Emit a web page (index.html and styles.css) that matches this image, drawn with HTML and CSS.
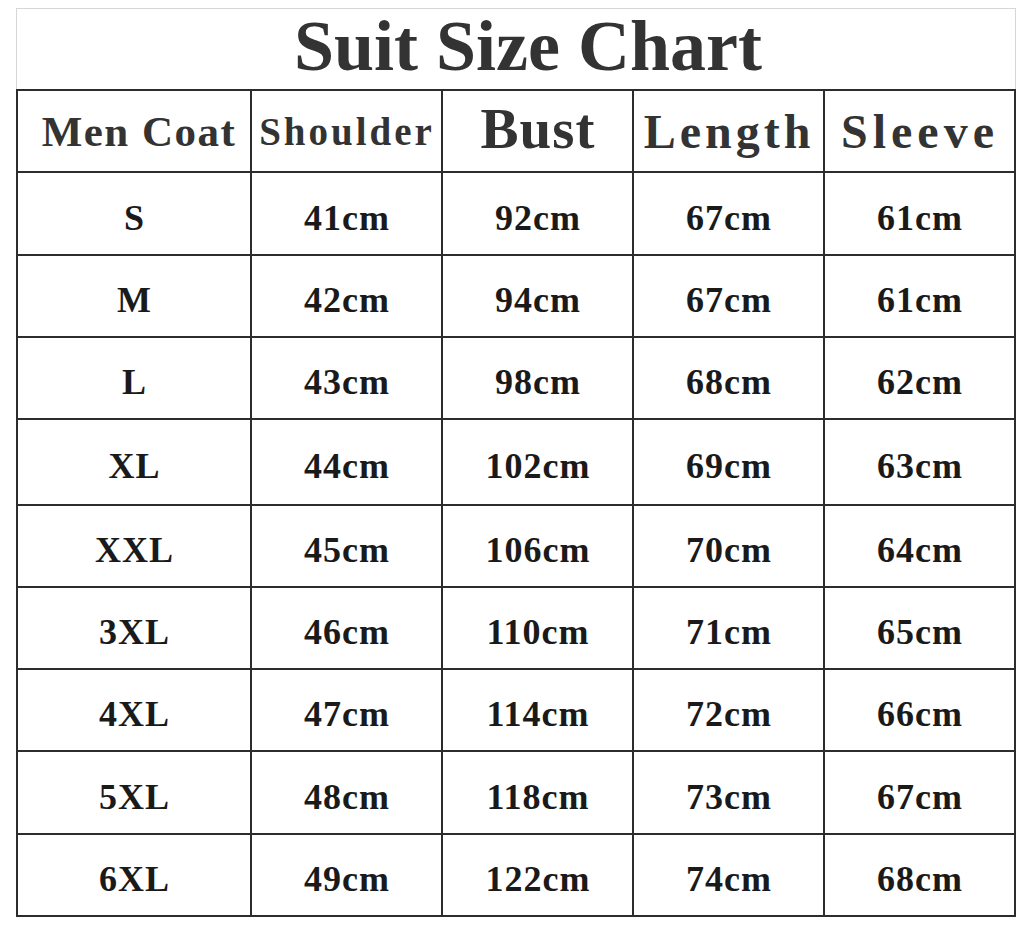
FILE: index.html
```html
<!DOCTYPE html>
<html lang="en">
<head>
<meta charset="utf-8">
<title>Suit Size Chart</title>
<link rel="stylesheet" href="styles.css">
</head>
<body>
<div class="page">
  <div class="title-box"><h1 class="title">Suit Size Chart</h1></div>
  <div class="chart">
    <div class="cell head h-men">Men Coat</div>
    <div class="cell head h-shoulder">Shoulder</div>
    <div class="cell head h-bust">Bust</div>
    <div class="cell head h-length">Length</div>
    <div class="cell head h-sleeve">Sleeve</div>

    <div class="cell">S</div><div class="cell">41cm</div><div class="cell">92cm</div><div class="cell">67cm</div><div class="cell">61cm</div>
    <div class="cell">M</div><div class="cell">42cm</div><div class="cell">94cm</div><div class="cell">67cm</div><div class="cell">61cm</div>
    <div class="cell">L</div><div class="cell">43cm</div><div class="cell">98cm</div><div class="cell">68cm</div><div class="cell">62cm</div>
    <div class="cell">XL</div><div class="cell">44cm</div><div class="cell">102cm</div><div class="cell">69cm</div><div class="cell">63cm</div>
    <div class="cell">XXL</div><div class="cell">45cm</div><div class="cell">106cm</div><div class="cell">70cm</div><div class="cell">64cm</div>
    <div class="cell">3XL</div><div class="cell">46cm</div><div class="cell">110cm</div><div class="cell">71cm</div><div class="cell">65cm</div>
    <div class="cell">4XL</div><div class="cell">47cm</div><div class="cell">114cm</div><div class="cell">72cm</div><div class="cell">66cm</div>
    <div class="cell">5XL</div><div class="cell">48cm</div><div class="cell">118cm</div><div class="cell">73cm</div><div class="cell">67cm</div>
    <div class="cell">6XL</div><div class="cell">49cm</div><div class="cell">122cm</div><div class="cell">74cm</div><div class="cell">68cm</div>
  </div>
</div>
</body>
</html>
```

FILE: styles.css
```css
html, body {
  margin: 0;
  padding: 0;
  background: #ffffff;
}

.page {
  padding: 8px 0 0 16px;
  width: 1000px;
}

.title-box {
  box-sizing: border-box;
  width: 1000px;
  height: 81px;
  border: 1px solid #d6d6d6;
  border-bottom: none;
  padding: 0 0 6px 24px;
  text-align: center;
}

.title {
  margin: 0;
  font-family: "Liberation Serif", "Times New Roman", serif;
  font-weight: bold;
  font-size: 72px;
  line-height: 74px;
  color: #333333;
}

.chart {
  display: grid;
  grid-template-columns: 234px 191px 191px 191px 191px;
  grid-template-rows: 82px 83px 82px 82px 86px 82px 82px 82px 83px 82px;
  border-left: 2px solid #2c2c2c;
  border-top: 2px solid #2c2c2c;
  width: 998px;
}

.cell {
  box-sizing: border-box;
  border-right: 2px solid #2c2c2c;
  border-bottom: 2px solid #2c2c2c;
  display: flex;
  align-items: center;
  justify-content: center;
  padding-top: 8px;
  padding-left: 1px;
  font-family: "Liberation Serif", "Times New Roman", serif;
  font-weight: bold;
  font-size: 36px;
  letter-spacing: 1px;
  color: #1a1a1a;
  white-space: nowrap;
}

.head {
  padding-top: 0;
  color: #333333;
  letter-spacing: 0;
}

.h-men {
  font-size: 43px;
  letter-spacing: 1.5px;
  padding-left: 10px;
}

.h-shoulder {
  font-size: 39px;
  letter-spacing: 3px;
}

.h-bust {
  font-size: 57px;
  letter-spacing: 1px;
  padding-bottom: 6px;
}

.h-length {
  font-size: 48px;
  letter-spacing: 4px;
}

.h-sleeve {
  font-size: 48px;
  letter-spacing: 5px;
}
```
